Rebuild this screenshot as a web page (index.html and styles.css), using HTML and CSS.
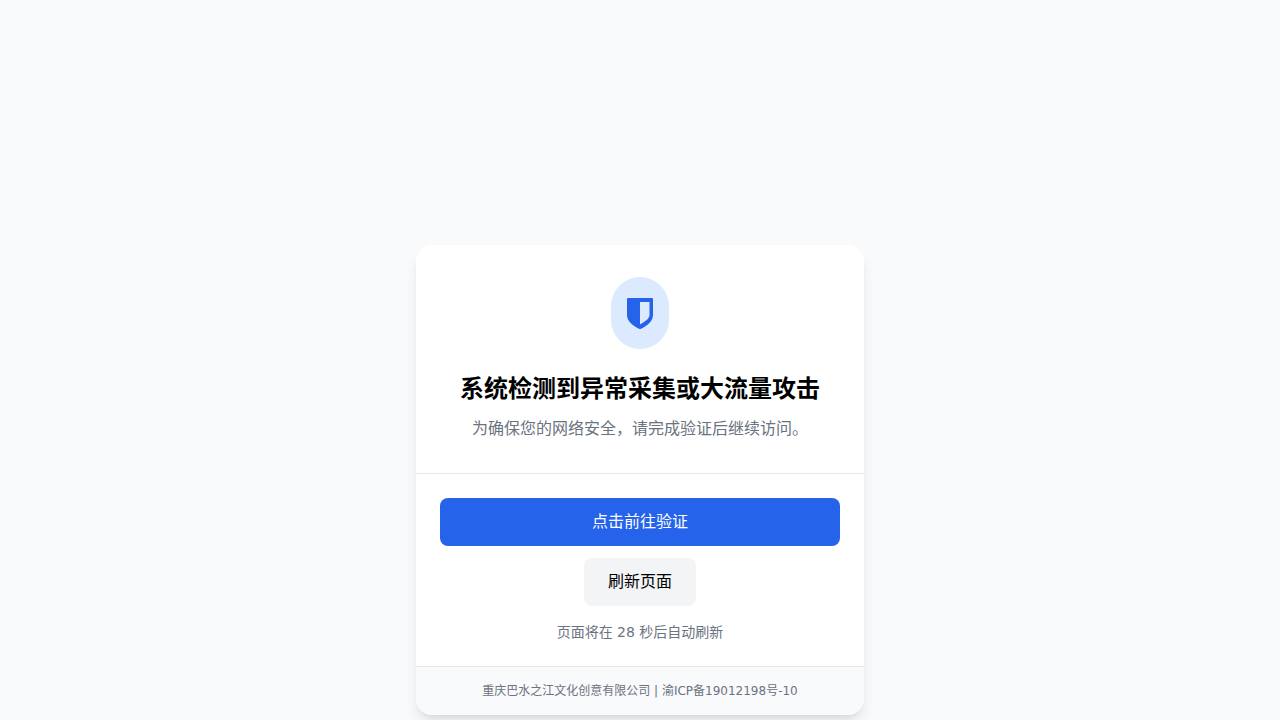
FILE: index.html
```html
<!DOCTYPE html>
<html lang="zh-CN">
<head>
<meta charset="utf-8">
<meta name="viewport" content="width=device-width, initial-scale=1">
<title>安全验证</title>
<link rel="stylesheet" href="styles.css">
</head>
<body>
<main class="page">
  <article class="card">
    <header class="card-header">
      <div class="badge">
        <svg class="shield" viewBox="0 0 26 31" aria-hidden="true">
          <path fill="currentColor" fill-rule="evenodd" d="M1.2 0H24.8Q26 0 26 1.2V17C26 23 20.500 27.700 13.500 30.900Q13 31.100 12.500 30.900C5.500 27.700 0 23 0 17V1.200Q0 0 1.200 0ZM13 3.900V26.500C18.200 23.600 22.500 20.600 22.500 16.800V3.900Z"/>
        </svg>
      </div>
      <h1 class="title">系统检测到异常采集或大流量攻击</h1>
      <p class="subtitle">为确保您的网络安全，请完成验证后继续访问。</p>
    </header>
    <section class="actions">
      <button class="button button-primary" type="button">点击前往验证</button>
      <button class="button button-secondary" type="button">刷新页面</button>
      <p class="countdown">页面将在 28 秒后自动刷新</p>
    </section>
    <footer class="card-footer">重庆巴水之江文化创意有限公司 | 渝ICP备19012198号-10</footer>
  </article>
</main>
</body>
</html>
```
FILE: styles.css
```css
*, *::before, *::after {
  box-sizing: border-box;
}

body {
  margin: 0;
  background: #f9fafb;
  color: #000;
  font-family: "DejaVu Sans", "Noto Sans CJK SC", sans-serif;
  font-size: 16px;
  line-height: 24px;
}

.page {
  display: flex;
  align-items: flex-end;
  justify-content: center;
  min-height: 100vh;
  padding: 16px 16px 5px;
}

.card {
  width: 100%;
  max-width: 448px;
  overflow: hidden;
  border-radius: 16px;
  background: #fff;
  box-shadow: 0 10px 15px -3px rgba(0, 0, 0, 0.1), 0 4px 6px -4px rgba(0, 0, 0, 0.1);
  text-align: center;
}

.card-header {
  padding: 32px 24px;
  border-bottom: 1px solid #e5e7eb;
}

.badge {
  display: inline-flex;
  align-items: center;
  justify-content: center;
  width: 58px;
  height: 72px;
  border-radius: 29px;
  background: #dbeafe;
  color: #2563eb;
  vertical-align: top;
}

.shield {
  width: 26px;
  height: 31px;
}

.title {
  margin: 24px 0 12px;
  font-size: 24px;
  font-weight: 700;
  line-height: 32px;
}

.subtitle {
  margin: 0;
  color: #6b7280;
}

.actions {
  display: flex;
  flex-direction: column;
  align-items: center;
  gap: 12px;
  padding: 24px;
}

.button {
  padding: 12px 24px;
  border: 0;
  border-radius: 8px;
  font: inherit;
  cursor: pointer;
}

.button-primary {
  width: 100%;
  background: #2563eb;
  color: #fff;
}

.button-secondary {
  background: #f3f4f6;
  color: #000;
}

.countdown {
  margin: 4px 0 0;
  color: #6b7280;
  font-size: 14px;
  line-height: 20px;
}

.card-footer {
  padding: 16px 24px;
  border-top: 1px solid #e5e7eb;
  background: #f9fafb;
  color: #6b7280;
  font-size: 12px;
  line-height: 16px;
}
```
